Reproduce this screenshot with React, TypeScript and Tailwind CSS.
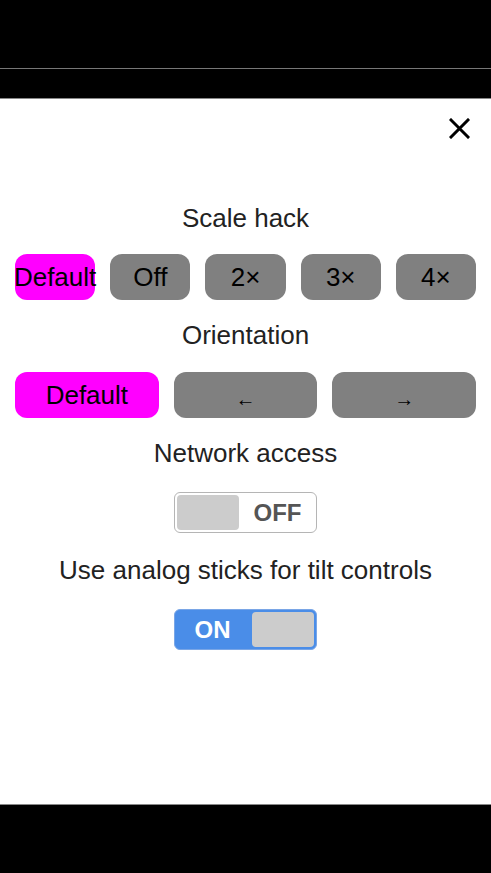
import { useState } from "react";

const font = { fontFamily: '"Liberation Sans", Arial, sans-serif' };

const Label = ({ children, className = "" }: { children: string; className?: string }) => (
  <div className={`text-center text-[26px] leading-[30px] text-[#222] ${className}`}>{children}</div>
);

const Choice = ({
  label,
  active,
  onClick,
  small,
}: {
  label: string;
  active: boolean;
  onClick: () => void;
  small?: boolean;
}) => (
  <button
    onClick={onClick}
    className={`flex-1 min-w-0 h-[46px] rounded-[12px] flex items-center justify-center text-black whitespace-nowrap overflow-visible ${
      active ? "bg-[#ff00ff]" : "bg-[#808080]"
    }`}
  >
    {small ? (
      <span className="text-[20px] leading-none pt-[8px]">{label}</span>
    ) : (
      <span className="text-[26px] leading-none">{label}</span>
    )}
  </button>
);

const Toggle = ({ on, onClick }: { on: boolean; onClick: () => void }) => (
  <button
    onClick={onClick}
    className={`w-[143px] h-[41px] rounded-[6px] border p-[2px] flex items-stretch ${
      on ? "bg-[#4a8de8] border-[#7aa6e6]" : "bg-white border-[#b5b5b5]"
    }`}
  >
    {on ? (
      <>
        <span className="flex-1 flex items-center justify-center pr-[4px] text-[24px] font-bold text-white">ON</span>
        <span className="w-[62px] rounded-[4px] bg-[#cccccc]" />
      </>
    ) : (
      <>
        <span className="w-[62px] rounded-[4px] bg-[#cccccc]" />
        <span className="flex-1 flex items-center justify-center pl-[2px] text-[24px] font-bold text-[#555]">OFF</span>
      </>
    )}
  </button>
);

export default function App() {
  const [scale, setScale] = useState("Default");
  const [orient, setOrient] = useState("Default");
  const [network, setNetwork] = useState(false);
  const [analog, setAnalog] = useState(true);

  return (
    <div style={font} className="w-full h-[873px] bg-black flex flex-col">
      <div className="h-[69px] border-b border-[#777]" />
      <div className="h-[29px]" />
      <div className="h-[707px] bg-white border-y border-[#888] flex flex-col">
        <div className="flex justify-end pt-[19px] pr-[21px]">
          <button aria-label="Close" className="w-[21px] h-[21px]">
            <svg viewBox="0 0 21 21" width="21" height="21">
              <path d="M2 2 L19 19 M19 2 L2 19" stroke="black" strokeWidth="3" strokeLinecap="square" />
            </svg>
          </button>
        </div>

        <Label className="mt-[64px]">Scale hack</Label>
        <div className="flex gap-[15px] px-[15px] mt-[21px]">
          {["Default", "Off", "2×", "3×", "4×"].map((s) => (
            <Choice key={s} label={s} active={scale === s} onClick={() => setScale(s)} />
          ))}
        </div>

        <Label className="mt-[20px]">Orientation</Label>
        <div className="flex gap-[15px] px-[15px] mt-[22px]">
          {["Default", "←", "→"].map((s) => (
            <Choice key={s} label={s} active={orient === s} onClick={() => setOrient(s)} small={s !== "Default"} />
          ))}
        </div>

        <Label className="mt-[20px]">Network access</Label>
        <div className="flex justify-center mt-[24px]">
          <Toggle on={network} onClick={() => setNetwork(!network)} />
        </div>

        <Label className="mt-[22px]">Use analog sticks for tilt controls</Label>
        <div className="flex justify-center mt-[24px]">
          <Toggle on={analog} onClick={() => setAnalog(!analog)} />
        </div>
      </div>
    </div>
  );
}
